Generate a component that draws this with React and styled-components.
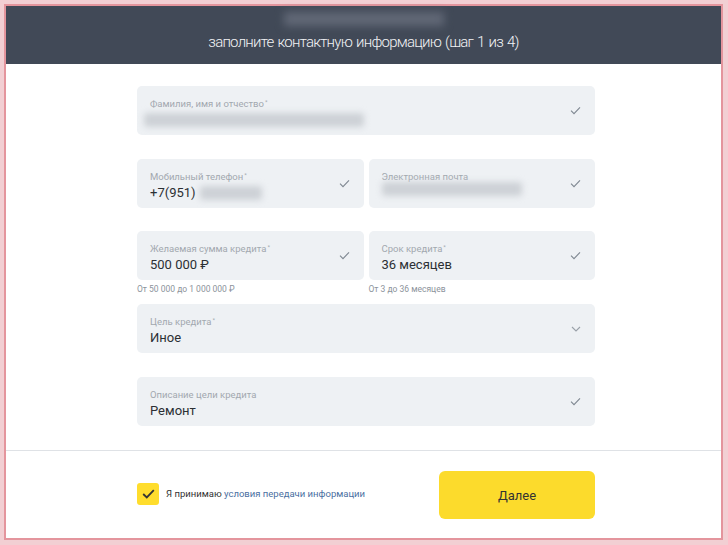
import React from 'react';
import styled, { createGlobalStyle } from 'styled-components';

const GlobalStyle = createGlobalStyle`
    html, body {
        margin: 0;
        padding: 0;
        background: #f2cfd3;
    }
    body {
        font-family: Roboto, "Liberation Sans", Arial, sans-serif;
        color: #333;
    }
`

const Frame = styled.div`
    box-sizing: border-box;
    width: 728px;
    height: 545px;
    padding: 4px 5px 5px 4px;
    background: #f2cfd3;
`

const Window = styled.div`
    box-sizing: border-box;
    height: 100%;
    border: 2px solid #e4959d;
    background: #fff;
    display: flex;
    flex-direction: column;
`

const Header = styled.header`
    height: 58px;
    background: #414957;
    display: flex;
    flex-direction: column;
    align-items: center;
`

const HeaderBlur = styled.div`
    width: 160px;
    height: 14px;
    margin-top: 6px;
    background: #616876;
    filter: blur(4px);
`

const HeaderTitle = styled.h1`
    margin: 7px 0 0;
    font-family: Roboto, "Liberation Sans", sans-serif;
    font-weight: 300;
    font-size: 15px;
    color: #f2f3f5;
    letter-spacing: -0.75px;
    word-spacing: 1px;
`

const Form = styled.div`
    width: 458px;
    margin: 22px 0 0 131px;
    display: flex;
    flex-direction: column;
`

const Row = styled.div`
    display: flex;
    gap: 5px;
    margin-bottom: ${p => p.$gap}px;
`

const Col = styled.div`
    flex: 1;
    min-width: 0;
    display: flex;
    flex-direction: column;
`

const Field = styled.div`
    box-sizing: border-box;
    height: 49px;
    background: #eef1f4;
    border-radius: 5px;
    padding: 12px 14px 0 13px;
    display: flex;
    align-items: center;
`

const FieldBody = styled.div`
    flex: 1;
    min-width: 0;
    align-self: flex-start;
    display: flex;
    flex-direction: column;
`

const Label = styled.div`
    font-size: 9.5px;
    color: #a2a8af;
    line-height: 12px;
    sup {
        font-size: 6px;
        vertical-align: top;
        position: relative;
        top: -2px;
        margin-left: 1px;
    }
`

const Value = styled.div`
    font-size: 13px;
    color: #2b2f33;
    line-height: 17px;
    margin-top: 1px;
    display: flex;
    align-items: center;
`

const Blur = styled.span`
    display: inline-block;
    width: ${p => p.$w}px;
    height: 14px;
    margin-left: ${p => p.$ml || 0}px;
    margin-top: ${p => p.$mt || 0}px;
    background: #cdd1d6;
    border-radius: 3px;
    filter: blur(3px);
`

const Icon = styled.svg`
    flex-shrink: 0;
    margin-left: 8px;
    margin-top: -12px;
`

const Hint = styled.div`
    font-size: 8.5px;
    color: #8c939b;
    margin-top: 4px;
    line-height: 11px;
`

const Divider = styled.div`
    height: 1px;
    background: #dfe2e6;
    margin-top: 24px;
`

const Footer = styled.div`
    width: 458px;
    margin: 20px 0 0 131px;
    display: flex;
    align-items: center;
    justify-content: space-between;
`

const Agree = styled.label`
    display: flex;
    align-items: center;
    gap: 7px;
    font-size: 9.5px;
    color: #333;
    margin-top: -3px;
    a {
        color: #4a6fa1;
        text-decoration: none;
    }
`

const CheckBox = styled.span`
    width: 22px;
    height: 22px;
    border-radius: 3px;
    background: #ffdd2d;
    display: flex;
    align-items: center;
    justify-content: center;
`

const NextButton = styled.button`
    width: 156px;
    height: 48px;
    border: none;
    border-radius: 6px;
    background: #fcdb2c;
    font-family: Roboto, "Liberation Sans", Arial, sans-serif;
    font-size: 13px;
    color: #333;
`

const Check = () => (
    <Icon width="11" height="9" viewBox="0 0 11 9">
        <path d="M1 4.6 L4 7.6 L10 1.4" fill="none" stroke="#7f8891" strokeWidth="1.1" />
    </Icon>
)

const Chevron = () => (
    <Icon width="10" height="6" viewBox="0 0 10 6">
        <path d="M1 1 L5 5 L9 1" fill="none" stroke="#9aa1a9" strokeWidth="1.1" />
    </Icon>
)

const InputField = ({ label, required, children, icon }) => (
    <Field>
        <FieldBody>
            <Label>{label}{required && <sup>*</sup>}</Label>
            <Value>{children}</Value>
        </FieldBody>
        {icon === 'chevron' ? <Chevron /> : <Check />}
    </Field>
)

const App = () => {
    return (
        <Frame>
            <GlobalStyle />
            <Window>
                <Header>
                    <HeaderBlur />
                    <HeaderTitle>заполните контактную информацию (шаг 1 из 4)</HeaderTitle>
                </Header>
                <Form>
                    <Row $gap={24}>
                        <Col>
                            <InputField label="Фамилия, имя и отчество" required>
                                <Blur $w={220} $ml={-6} $mt={2} />
                            </InputField>
                        </Col>
                    </Row>
                    <Row $gap={23}>
                        <Col>
                            <InputField label="Мобильный телефон" required>
                                +7(951)<Blur $w={62} $ml={4} />
                            </InputField>
                        </Col>
                        <Col>
                            <InputField label="Электронная почта">
                                <Blur $w={140} $mt={-2} />
                            </InputField>
                        </Col>
                    </Row>
                    <Row $gap={9}>
                        <Col>
                            <InputField label="Желаемая сумма кредита" required>500 000 ₽</InputField>
                            <Hint>От 50 000 до 1 000 000 ₽</Hint>
                        </Col>
                        <Col>
                            <InputField label="Срок кредита" required>36 месяцев</InputField>
                            <Hint>От 3 до 36 месяцев</Hint>
                        </Col>
                    </Row>
                    <Row $gap={24}>
                        <Col>
                            <InputField label="Цель кредита" required icon="chevron">Иное</InputField>
                        </Col>
                    </Row>
                    <Row $gap={0}>
                        <Col>
                            <InputField label="Описание цели кредита">Ремонт</InputField>
                        </Col>
                    </Row>
                </Form>
                <Divider />
                <Footer>
                    <Agree>
                        <CheckBox>
                            <svg width="13" height="10" viewBox="0 0 13 10">
                                <path d="M1.2 5 L4.8 8.4 L11.8 1.2" fill="none" stroke="#333" strokeWidth="1.8" />
                            </svg>
                        </CheckBox>
                        <span>Я принимаю <a href="#">условия передачи информации</a></span>
                    </Agree>
                    <NextButton>Далее</NextButton>
                </Footer>
            </Window>
        </Frame>
    );
}

export default App;
